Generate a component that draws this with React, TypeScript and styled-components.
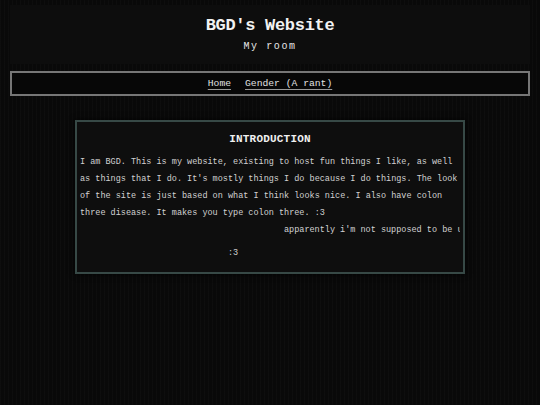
import styled, { createGlobalStyle } from 'styled-components';

const GlobalStyle = createGlobalStyle`
  html, body {
    margin: 0;
    padding: 0;
    background-color: #090909;
    background-image: repeating-linear-gradient(
      90deg,
      rgba(255, 255, 255, 0.018) 0 1px,
      transparent 1px 4px
    );
    min-height: 100vh;
    font-family: 'Liberation Mono', 'DejaVu Sans Mono', monospace;
    color: #d4d4d4;
  }
`;

const Page = styled.div`
  display: flex;
  flex-direction: column;
  align-items: center;
  padding: 5px 10px 0;
`;

const Header = styled.header`
  align-self: stretch;
  display: flex;
  flex-direction: column;
  align-items: center;
  gap: 3px;
  padding: 10px 0;
  background: #0d0d0d;
`;

const Title = styled.h1`
  margin: 0;
  font-size: 17px;
  line-height: 22px;
  font-weight: bold;
  letter-spacing: -0.3px;
  color: #f2f2f2;
`;

const Subtitle = styled.div`
  font-size: 10px;
  line-height: 14px;
  letter-spacing: 1.6px;
  color: #e6e6e6;
`;

const Nav = styled.nav`
  align-self: stretch;
  margin-top: 7px;
  height: 21px;
  border: 2px solid #767676;
  background: #070707;
  display: flex;
  align-items: center;
  justify-content: center;
  gap: 14px;
`;

const NavLink = styled.a`
  font-size: 9.7px;
  color: #e2e2e2;
  text-decoration: underline;
  text-decoration-color: #9a9a9a;
  text-underline-offset: 3px;
`;

const Card = styled.section`
  margin-top: 24px;
  width: 380px;
  padding: 10px 3px 10px;
  border: 2px solid #374946;
  background: #0e0e0e;
  box-shadow: 0 0 6px rgba(0, 0, 0, 0.8);
`;

const CardTitle = styled.h2`
  margin: 0 0 8px;
  text-align: center;
  font-size: 11px;
  line-height: 14px;
  font-weight: bold;
  letter-spacing: 0.2px;
  color: #f0f0f0;
`;

const Body = styled.p`
  margin: 0;
  font-size: 8.5px;
  line-height: 17px;
  color: #d2d2d2;
`;

const Marquee = styled.div<{ indent: number }>`
  font-size: 8.5px;
  line-height: 17px;
  white-space: nowrap;
  overflow: hidden;
  padding-left: ${({ indent }) => indent}px;
  color: #d2d2d2;
`;

const Face = styled(Marquee)`
  margin-top: 6px;
`;

export default function App() {
  return (
    <>
      <GlobalStyle />
      <Page>
        <Header>
          <Title>BGD's Website</Title>
          <Subtitle>My room</Subtitle>
        </Header>
        <Nav>
          <NavLink href="#">Home</NavLink>
          <NavLink href="#">Gender (A rant)</NavLink>
        </Nav>
        <Card>
          <CardTitle>INTRODUCTION</CardTitle>
          <Body>
            I am BGD. This is my website, existing to host fun things I like, as well as things
            that I do. It's mostly things I do because I do things. The look of the site is just
            based on what I think looks nice. I also have colon three disease. It makes you type
            colon three. :3
          </Body>
          <Marquee indent={204}>apparently i'm not supposed to be using marquee anymore</Marquee>
          <Face indent={148}>:3</Face>
        </Card>
      </Page>
    </>
  );
}
